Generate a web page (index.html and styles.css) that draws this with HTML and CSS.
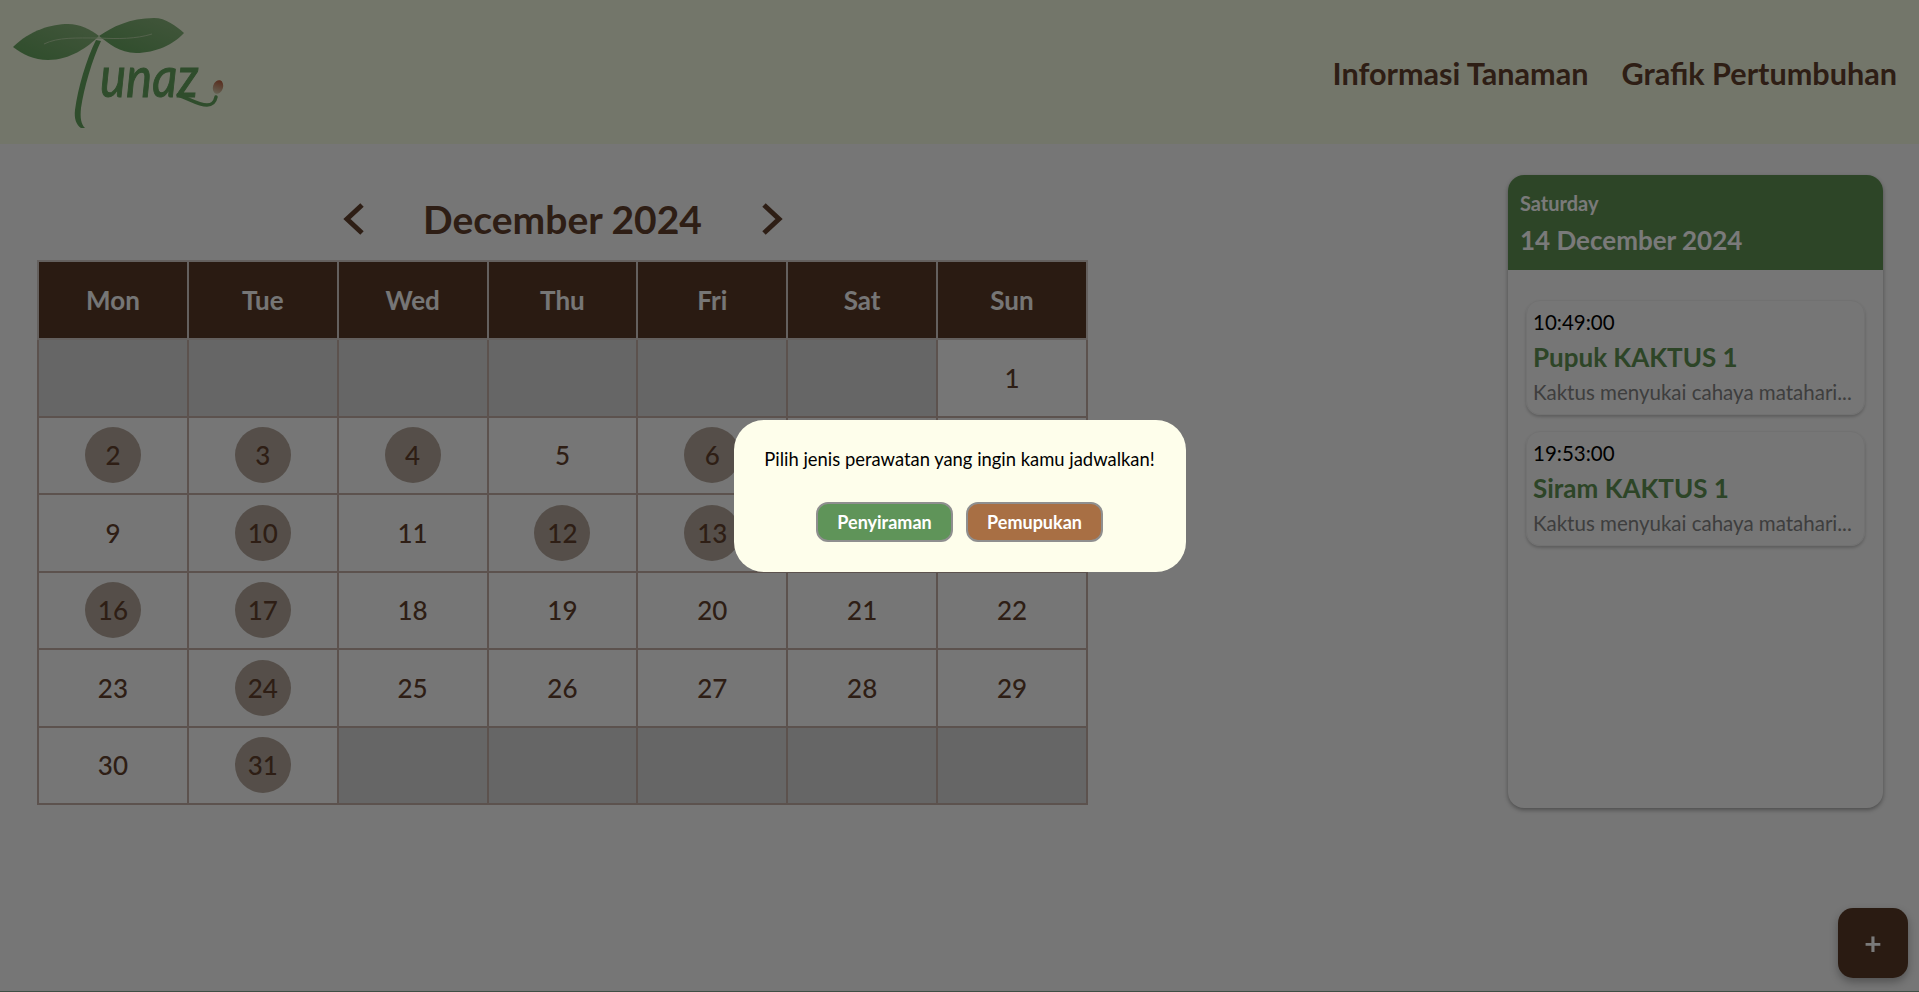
FILE: index.html
```html
<!DOCTYPE html>
<html lang="en">
<head>
    <meta charset="UTF-8">
    <meta name="viewport" content="width=device-width, initial-scale=1.0">
    <title>Tunaz - Jadwal Perawatan</title>
    <link rel="stylesheet" href="styles.css">
</head>
<body>

<header class="topbar">
    <a class="logo" href="#" aria-label="Tunaz">
        <svg width="240" height="144" viewBox="0 0 240 144">
            <defs>
                <linearGradient id="leafGrad" x1="0" y1="1" x2="1" y2="0">
                    <stop offset="0" stop-color="#5c9a56"/>
                    <stop offset="1" stop-color="#86ac78"/>
                </linearGradient>
                <linearGradient id="seedGrad" x1="0" y1="0" x2="0" y2="1">
                    <stop offset="0" stop-color="#b0583a"/>
                    <stop offset="1" stop-color="#c9c3a6"/>
                </linearGradient>
            </defs>
            <path class="leaf" d="M13 47 C30 30 52 24 68 24 C80 24 90 29 99 36 C88 47 70 60 48 60 C34 60 22 54 13 47 Z"/>
            <path class="leaf" d="M99 36 C112 27 130 18 154 18 C166 18 176 26 184 33 C174 44 156 53 136 53 C120 53 108 43 99 36 Z"/>
            <path class="vein" d="M44 44 C58 37 76 38 99 38 C118 39 136 39 152 34"/>
            <path class="stem" d="M96 40 L101 41 C92 60 84 88 81 108 C80 118 81 124 85 128 L81 128 C76 125 74 118 75 110 C78 88 86 60 96 40 Z"/>
            <text class="wordmark" transform="translate(100 97) scale(.88 1)">unaz</text>
            <path class="swash" d="M178 95 C188 98 198 105 207 105 C212 105 215 102 216 97"/>
            <ellipse cx="218" cy="87" rx="5" ry="7" transform="rotate(18 218 87)" fill="url(#seedGrad)"/>
        </svg>
    </a>
    <nav class="topnav">
        <a href="#">Informasi Tanaman</a>
        <a href="#">Grafik Pertumbuhan</a>
    </nav>
</header>

<main class="content">
    <section class="calendar">
        <div class="month-bar">
            <button class="month-btn" type="button" aria-label="Previous month">
                <svg width="24" height="34" viewBox="0 0 24 34"><path d="M20 3 L5 17 L20 31"/></svg>
            </button>
            <h1 class="month-title">December 2024</h1>
            <button class="month-btn" type="button" aria-label="Next month">
                <svg width="24" height="34" viewBox="0 0 24 34"><path d="M4 3 L19 17 L4 31"/></svg>
            </button>
        </div>
        <table class="cal-table">
            <thead>
                <tr><th>Mon</th><th>Tue</th><th>Wed</th><th>Thu</th><th>Fri</th><th>Sat</th><th>Sun</th></tr>
            </thead>
            <tbody>
                <tr>
                    <td class="empty"></td><td class="empty"></td><td class="empty"></td><td class="empty"></td><td class="empty"></td><td class="empty"></td>
                    <td><span class="day">1</span></td>
                </tr>
                <tr>
                    <td><span class="day has-task">2</span></td>
                    <td><span class="day has-task">3</span></td>
                    <td><span class="day has-task">4</span></td>
                    <td><span class="day">5</span></td>
                    <td><span class="day has-task">6</span></td>
                    <td><span class="day">7</span></td>
                    <td><span class="day">8</span></td>
                </tr>
                <tr>
                    <td><span class="day">9</span></td>
                    <td><span class="day has-task">10</span></td>
                    <td><span class="day">11</span></td>
                    <td><span class="day has-task">12</span></td>
                    <td><span class="day has-task">13</span></td>
                    <td><span class="day">14</span></td>
                    <td><span class="day">15</span></td>
                </tr>
                <tr>
                    <td><span class="day has-task">16</span></td>
                    <td><span class="day has-task">17</span></td>
                    <td><span class="day">18</span></td>
                    <td><span class="day">19</span></td>
                    <td><span class="day">20</span></td>
                    <td><span class="day">21</span></td>
                    <td><span class="day">22</span></td>
                </tr>
                <tr>
                    <td><span class="day">23</span></td>
                    <td><span class="day has-task">24</span></td>
                    <td><span class="day">25</span></td>
                    <td><span class="day">26</span></td>
                    <td><span class="day">27</span></td>
                    <td><span class="day">28</span></td>
                    <td><span class="day">29</span></td>
                </tr>
                <tr>
                    <td><span class="day">30</span></td>
                    <td><span class="day has-task">31</span></td>
                    <td class="empty"></td><td class="empty"></td><td class="empty"></td><td class="empty"></td><td class="empty"></td>
                </tr>
            </tbody>
        </table>
    </section>

    <aside class="agenda">
        <div class="agenda-head">
            <div class="agenda-day">Saturday</div>
            <div class="agenda-date">14 December 2024</div>
        </div>
        <div class="agenda-list">
            <div class="task-card">
                <div class="task-time">10:49:00</div>
                <div class="task-title">Pupuk KAKTUS 1</div>
                <div class="task-desc">Kaktus menyukai cahaya matahari...</div>
            </div>
            <div class="task-card">
                <div class="task-time">19:53:00</div>
                <div class="task-title">Siram KAKTUS 1</div>
                <div class="task-desc">Kaktus menyukai cahaya matahari...</div>
            </div>
        </div>
    </aside>
</main>

<footer class="page-foot"></footer>

<button class="fab" type="button" aria-label="Tambah jadwal">+</button>

<div class="overlay">
    <div class="dialog">
        <p class="dialog-text">Pilih jenis perawatan yang ingin kamu jadwalkan!</p>
        <div class="dialog-actions">
            <button class="btn btn-water" type="button">Penyiraman</button>
            <button class="btn btn-feed" type="button">Pemupukan</button>
        </div>
    </div>
</div>

</body>
</html>
```

FILE: styles.css
```css
html {
    overflow: hidden;
}
body {
    font-family: Lato, "Open Sans", sans-serif;
    background-color: #ececec;
    margin: 0;
    color: #583a28;
}
.topbar {
    height: 144px;
    background-color: #e6ecd4;
    display: flex;
    justify-content: space-between;
    align-items: center;
    padding-right: 22px;
}
.logo {
    display: block;
    height: 144px;
}
.leaf {
    fill: url(#leafGrad);
}
.vein {
    fill: none;
    stroke: #a8c498;
    stroke-width: 1;
}
.stem {
    fill: #5f9a58;
}
.wordmark {
    font-family: Lato, sans-serif;
    font-style: italic;
    font-size: 56px;
    fill: #5f9a58;
    stroke: #5f9a58;
    stroke-width: 1;
}
.swash {
    fill: none;
    stroke: #5f9a58;
    stroke-width: 3.5;
    stroke-linecap: round;
}
.topnav {
    display: flex;
    gap: 33px;
    margin-top: 2px;
}
.topnav a {
    font-size: 30.6px;
    font-weight: 700;
    color: #5c3d2a;
    text-decoration: none;
}
.content {
    height: 847px;
    display: flex;
    justify-content: space-between;
    padding: 0 36px 0 37px;
}
.calendar {
    width: 1051px;
}
.month-bar {
    height: 116px;
    display: flex;
    justify-content: center;
    align-items: center;
    gap: 48px;
    padding-top: 34px;
    box-sizing: border-box;
}
.month-title {
    margin: 0;
    font-size: 39px;
    font-weight: 700;
    color: #5c3d2a;
    width: 298px;
    text-align: center;
    white-space: nowrap;
}
.month-btn {
    border: none;
    background: none;
    padding: 0;
    width: 24px;
    height: 34px;
    cursor: pointer;
}
.month-btn path {
    fill: none;
    stroke: #5c3d2a;
    stroke-width: 5;
}
.cal-table {
    width: 1051px;
    table-layout: fixed;
    border-collapse: collapse;
}
.cal-table th,
.cal-table td {
    border: 2px solid #b8a49c;
    text-align: center;
    padding: 0;
    height: 76px;
}
.cal-table td {
    height: 75.5px;
}
.cal-table th {
    background-color: #553724;
    color: #ececec;
    font-size: 26px;
    font-weight: 700;
    border-color: #c8c0bc;
}
.cal-table td.empty {
    background-color: #cdcdcd;
}
.day {
    display: inline-flex;
    width: 56px;
    height: 56px;
    border-radius: 50%;
    align-items: center;
    justify-content: center;
    font-size: 26px;
    font-weight: 500;
    color: #5c3d2a;
    vertical-align: middle;
}
.day.has-task {
    background-color: #aa9d92;
}
.agenda {
    width: 375px;
    height: 633px;
    margin-top: 31px;
    border-radius: 16px;
    box-shadow: 0 2px 4px rgba(0, 0, 0, 0.35);
    overflow: hidden;
}
.agenda-head {
    height: 95px;
    box-sizing: border-box;
    background-color: #5a8a4e;
    color: #f4f4f4;
    padding: 14px 12px;
    font-weight: 700;
}
.agenda-day {
    font-size: 20px;
    line-height: 28px;
}
.agenda-date {
    font-size: 26px;
    line-height: 46px;
}
.agenda-list {
    padding: 30px 18px;
    display: flex;
    flex-direction: column;
    gap: 16px;
}
.task-card {
    height: 115px;
    box-sizing: border-box;
    padding: 8px 6px;
    border-radius: 14px;
    border: 1px solid #e2e2e2;
    box-shadow: 0 2px 3px rgba(0, 0, 0, 0.2);
}
.task-time {
    font-size: 20.5px;
    line-height: 26px;
    color: #000;
}
.task-title {
    font-size: 26px;
    font-weight: 700;
    line-height: 44px;
    color: #5a8a4e;
}
.task-desc {
    font-size: 20.5px;
    line-height: 27px;
    color: #7c7c7c;
    white-space: nowrap;
}
.page-foot {
    height: 1px;
    background-color: #7f9f8a;
}
.fab {
    position: fixed;
    right: 11px;
    bottom: 14px;
    width: 70px;
    height: 70px;
    border: none;
    border-radius: 15px;
    background-color: #553724;
    color: #f4f4f4;
    font-family: Lato, sans-serif;
    font-size: 30px;
    font-weight: 700;
    box-shadow: 0 4px 8px rgba(0, 0, 0, 0.3);
    cursor: pointer;
}
.overlay {
    position: fixed;
    top: 0;
    left: 0;
    width: 100%;
    height: 100%;
    background-color: rgba(0, 0, 0, 0.5);
    display: flex;
    align-items: center;
    justify-content: center;
}
.dialog {
    width: 452px;
    height: 152px;
    box-sizing: border-box;
    background-color: #fefeeb;
    border-radius: 30px;
    padding: 26px 0 0;
    text-align: center;
}
.dialog-text {
    margin: 0 0 30px;
    font-size: 18.4px;
    line-height: 26px;
    color: #000;
}
.dialog-actions {
    display: flex;
    justify-content: center;
    gap: 13px;
}
.btn {
    width: 137px;
    height: 40px;
    border: 2px solid #8f8f8f;
    border-radius: 12px;
    color: #fff;
    font-family: Lato, sans-serif;
    font-size: 18px;
    font-weight: 700;
    cursor: pointer;
}
.btn-water {
    background-color: #5f9459;
}
.btn-feed {
    background-color: #a86f44;
}
```
